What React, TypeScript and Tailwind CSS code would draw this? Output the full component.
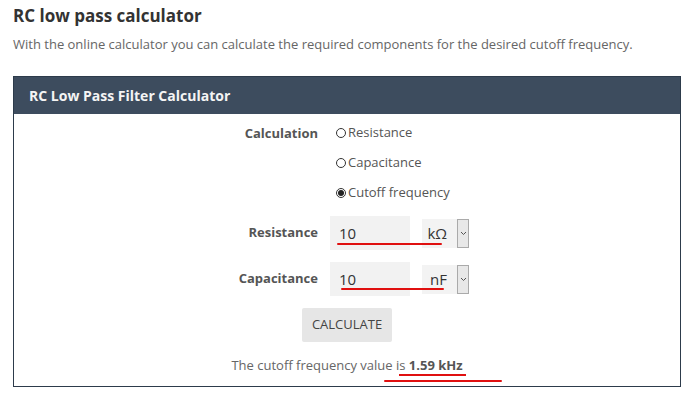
import React from "react";

function Radio({ checked, label }: { checked?: boolean; label: string }) {
  return (
    <div className="flex h-[30px] items-center">
      <span className="ml-[6px] mr-[2px] flex h-[10px] w-[10px] items-center justify-center rounded-full border border-[#333] bg-white">
        {checked && <span className="h-[6px] w-[6px] rounded-full bg-[#222]" />}
      </span>
      <span className="text-[13px] text-[#555]">{label}</span>
    </div>
  );
}

function Field({ label, value, unit, line, lineTop }: { label: string; value: string; unit: string; line: [number, number]; lineTop: number }) {
  return (
    <div className="flex items-center">
      <div className="w-[316px] pr-[12px] text-right text-[13px] font-bold text-[#555]">{label}</div>
      <div className="relative flex items-center">
        <div className="flex h-[34px] w-[80px] items-center bg-[#f2f2f2] pl-[9px] text-[15px] text-[#333]">{value}</div>
        <div className="ml-[12px] flex h-[29px] items-stretch">
          <div className="flex w-[35px] items-center justify-end bg-[#f3f3f3] pr-[10px] text-[15px] text-[#333]">{unit}</div>
          <div className="flex w-[12px] items-center justify-center border border-[#aaa] bg-[#e8e8e8]">
            <svg width="7" height="5" viewBox="0 0 7 5">
              <path d="M1 1 L3.5 3.5 L6 1" fill="none" stroke="#555" strokeWidth="1" />
            </svg>
          </div>
        </div>
        <div
          className="absolute h-[2px] rounded-full bg-[#e01010]"
          style={{ left: line[0], width: line[1], top: lineTop }}
        />
      </div>
    </div>
  );
}

export default function App() {
  return (
    <div className="h-[400px] w-[694px] bg-white" style={{ fontFamily: '"Open Sans", "Noto Sans", sans-serif' }}>
      <div className="px-[13px] pt-[3px]">
        <h1 className="text-[17px] font-bold leading-[26px] text-[#333]">RC low pass calculator</h1>
        <p className="mt-[5px] text-[13px] leading-[20px] text-[#666]">
          With the online calculator you can calculate the required components for the desired cutoff frequency.
        </p>
        <div className="mt-[22px] w-[668px] border-[1.5px] border-[#2d3b4b] pb-[11px]">
          <div className="flex h-[37px] items-center bg-[#3d4c5e] pl-[15px] text-[14px] font-bold text-[#f4f4f4]">
            RC Low Pass Filter Calculator
          </div>
          <div className="pt-[4px]">
            <div className="flex">
              <div className="w-[316px] pr-[12px] text-right text-[13px] font-bold leading-[30px] text-[#555]">Calculation</div>
              <div className="flex flex-col">
                <Radio label="Resistance" />
                <Radio label="Capacitance" />
                <Radio checked label="Cutoff frequency" />
              </div>
            </div>
            <div className="mt-[8px] flex flex-col gap-[12px]">
              <Field label="Resistance" value="10" unit="kΩ" line={[7, 105]} lineTop={27} />
              <Field label="Capacitance" value="10" unit="nF" line={[11, 103]} lineTop={26} />
            </div>
            <div className="mt-[12px] flex justify-center">
              <div className="flex h-[34px] w-[90px] items-center justify-center rounded-[2px] bg-[#e6e6e6] text-[13px] text-[#444]">
                CALCULATE
              </div>
            </div>
            <div className="relative mt-[13px] text-center text-[13px] leading-[20px] text-[#666]">
              The cutoff frequency value is <b className="text-[#555]">1.59 kHz</b>
              <div className="absolute left-[385px] top-[19px] h-[2px] w-[67px] bg-[#e01010]" />
              <div className="absolute left-[370px] top-[25px] h-[2px] w-[118px] rounded-full bg-[#e01010]" />
            </div>
          </div>
        </div>
      </div>
    </div>
  );
}
